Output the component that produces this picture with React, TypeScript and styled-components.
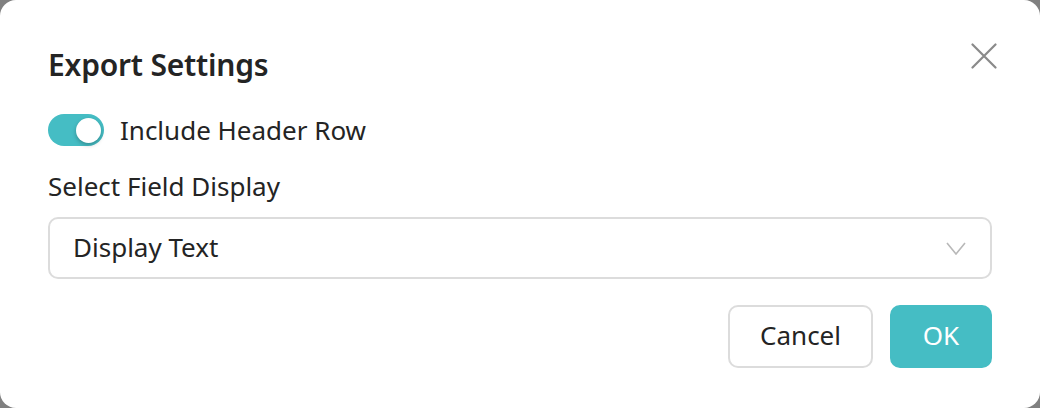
import React, { useState } from "react";
import styled, { createGlobalStyle } from "styled-components";

const GlobalStyle = createGlobalStyle`
	html, body {
		margin: 0;
		padding: 0;
		background: #808080;
	}
	body {
		font-family: "Noto Sans", "Open Sans", sans-serif;
		color: #242424;
	}
`;

const teal = "#45bdc4";

const Dialog = styled.div`
	box-sizing: border-box;
	width: 1040px;
	height: 408px;
	background: #ffffff;
	border-radius: 16px;
	padding: 40px 48px 40px 48px;
	display: flex;
	flex-direction: column;
`;

const Header = styled.div`
	display: flex;
	align-items: center;
	justify-content: space-between;
	height: 52px;
`;

const Title = styled.h2`
	margin: -3px 0 0 0;
	font-size: 30px;
	font-weight: 600;
	letter-spacing: -0.2px;
`;

const CloseButton = styled.button`
	align-self: flex-start;
	border: none;
	background: none;
	padding: 0;
	margin: -2px -10px 0 0;
	width: 36px;
	height: 36px;
	display: flex;
	align-items: center;
	justify-content: center;
	color: #8a8a8a;
	cursor: pointer;
`;

const ToggleRow = styled.label`
	display: flex;
	align-items: center;
	gap: 16px;
	margin-top: 20px;
	height: 36px;
	font-size: 26px;
	cursor: pointer;
`;

const Track = styled.span<{ $on: boolean }>`
	position: relative;
	width: 56px;
	height: 32px;
	border-radius: 16px;
	background: ${(p) => (p.$on ? teal : "#cccccc")};
	flex-shrink: 0;
`;

const Knob = styled.span<{ $on: boolean }>`
	position: absolute;
	top: 4px;
	left: ${(p) => (p.$on ? "28px" : "4px")};
	width: 25px;
	height: 25px;
	border-radius: 50%;
	background: #ffffff;
	box-shadow: 0 2px 4px rgba(0, 0, 0, 0.25);
`;

const FieldLabel = styled.div`
	font-size: 26px;
	line-height: 36px;
	margin-top: 20px;
`;

const SelectBox = styled.div`
	box-sizing: border-box;
	margin-top: 13px;
	height: 62px;
	border: 2px solid #dcdcdc;
	border-radius: 10px;
	display: flex;
	align-items: center;
	justify-content: space-between;
	padding: 0 24px 2px 23px;
	font-size: 26px;
`;

const Chevron = styled.span`
	color: #b8b8b8;
	display: flex;
	margin-top: 2px;
`;

const Footer = styled.div`
	display: flex;
	justify-content: flex-end;
	gap: 17px;
	margin-top: auto;
`;

const Button = styled.button<{ $primary?: boolean }>`
	box-sizing: border-box;
	height: 63px;
	padding: 0 ${(p) => (p.$primary ? "28px" : "30px")} 3px;
	min-width: ${(p) => (p.$primary ? "102px" : "144px")};
	border-radius: 10px;
	font-family: inherit;
	font-size: 26px;
	border: 2px solid ${(p) => (p.$primary ? teal : "#dcdcdc")};
	background: ${(p) => (p.$primary ? teal : "#ffffff")};
	color: ${(p) => (p.$primary ? "#ffffff" : "#242424")};
	cursor: pointer;
`;

function App() {
	const [includeHeader, setIncludeHeader] = useState(true);
	return (
		<>
			<GlobalStyle />
			<Dialog>
				<Header>
					<Title>Export Settings</Title>
					<CloseButton aria-label="Close">
						<svg width="26" height="26" viewBox="0 0 26 26">
							<path
								d="M1.5 1.5 L24.5 24.5 M24.5 1.5 L1.5 24.5"
								stroke="currentColor"
								strokeWidth="2.2"
								strokeLinecap="round"
							/>
						</svg>
					</CloseButton>
				</Header>
				<ToggleRow onClick={() => setIncludeHeader((v) => !v)}>
					<Track $on={includeHeader}>
						<Knob $on={includeHeader} />
					</Track>
					Include Header Row
				</ToggleRow>
				<FieldLabel>Select Field Display</FieldLabel>
				<SelectBox>
					Display Text
					<Chevron>
						<svg width="20" height="13" viewBox="0 0 20 13">
							<path
								d="M1 1 L10 12 L19 1"
								fill="none"
								stroke="currentColor"
								strokeWidth="1.6"
							/>
						</svg>
					</Chevron>
				</SelectBox>
				<Footer>
					<Button>Cancel</Button>
					<Button $primary>OK</Button>
				</Footer>
			</Dialog>
		</>
	);
}

export default App;
